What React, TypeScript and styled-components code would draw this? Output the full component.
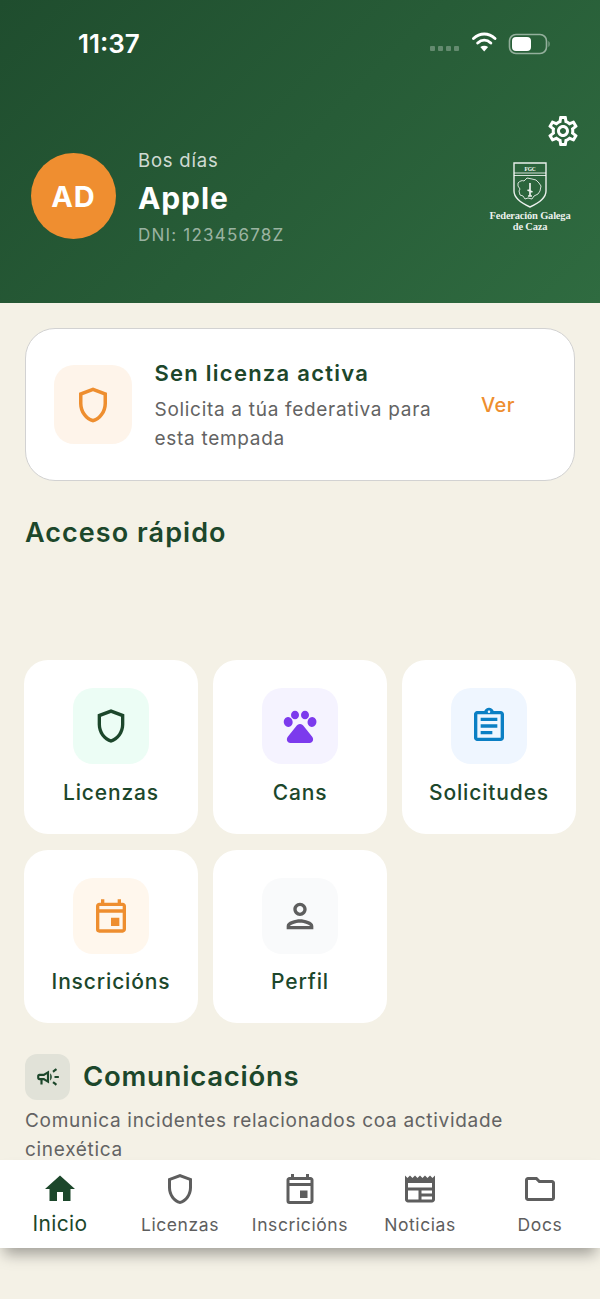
import React from 'react';
import styled, { createGlobalStyle } from 'styled-components';
import {
  MdHome,
  MdOutlineAssignment,
  MdOutlineCampaign,
  MdOutlineEvent,
  MdOutlineFolder,
  MdOutlineNewspaper,
  MdOutlinePerson,
  MdOutlineSettings,
  MdOutlineShield,
} from 'react-icons/md';

const GlobalStyle = createGlobalStyle`
  html, body {
    margin: 0;
    padding: 0;
    background: #f4f1e6;
  }
  * {
    box-sizing: border-box;
  }
  body {
    font-family: Inter, "Liberation Sans", sans-serif;
  }
`;

const Screen = styled.div`
  width: 600px;
  height: 1299px;
  overflow: hidden;
  background: #f4f1e6;
  display: flex;
  flex-direction: column;
`;

const Header = styled.header`
  height: 303px;
  flex: none;
  background: linear-gradient(135deg, #1f4d2e 0%, #2f6b40 100%);
  color: #fff;
`;

const StatusBar = styled.div`
  height: 113px;
  padding: 29px 50px 0 78px;
  display: flex;
  align-items: flex-start;
  justify-content: space-between;
`;

const Time = styled.span`
  font-size: 26px;
  line-height: 30px;
  font-weight: 600;
`;

const StatusIcons = styled.svg`
  width: 120px;
  height: 30px;
  display: block;
`;

const HeaderRow = styled.div`
  display: flex;
  justify-content: space-between;
  align-items: flex-start;
  padding: 0 19px 0 31px;
`;

const Profile = styled.div`
  display: flex;
  align-items: flex-start;
  gap: 22px;
  margin-top: 35px;
`;

const Avatar = styled.div`
  width: 85px;
  height: 86px;
  margin-top: 5px;
  border-radius: 50%;
  background: #ef8e30;
  display: flex;
  align-items: center;
  justify-content: center;
  font-size: 29px;
  font-weight: 700;
  letter-spacing: 1px;
`;

const ProfileText = styled.div`
  display: flex;
  flex-direction: column;
`;

const Greeting = styled.span`
  font-size: 18.5px;
  line-height: 24px;
  letter-spacing: 0.8px;
  color: rgba(255, 255, 255, 0.8);
`;

const UserName = styled.span`
  font-size: 30px;
  line-height: 38px;
  font-weight: 700;
  letter-spacing: 0.9px;
  margin-top: 7px;
`;

const Dni = styled.span`
  font-size: 17px;
  line-height: 24px;
  letter-spacing: 1.2px;
  color: rgba(255, 255, 255, 0.55);
  margin-top: 6px;
`;

const HeaderSide = styled.div`
  display: flex;
  flex-direction: column;
  align-items: flex-end;
`;

const Crest = styled.div`
  width: 80px;
  margin: 13px 11px 0 0;
  display: flex;
  flex-direction: column;
  align-items: center;
  font-family: "Liberation Serif", serif;
  font-size: 10.5px;
  line-height: 11px;
  font-weight: 700;
  text-align: center;
  letter-spacing: -0.2px;
  white-space: nowrap;
  color: rgba(255, 255, 255, 0.92);
`;

const CrestShield = styled.svg`
  width: 34px;
  height: 46px;
  display: block;
  margin-bottom: 2px;
`;

const BandText = styled.text`
  font-family: "Liberation Serif", serif;
  font-size: 5.5px;
  fill: #fff;
  stroke: none;
  text-anchor: middle;
`;

const Main = styled.main`
  height: 857px;
  flex: none;
  overflow: hidden;
  padding: 25px 24px 0;
`;

const LicenseCard = styled.section`
  height: 153px;
  margin: 0 1px;
  background: #fff;
  border: 1.5px solid #d2d2d2;
  border-radius: 30px;
  display: flex;
  align-items: center;
  padding: 0 59px 0 27.5px;
`;

const LicenseIcon = styled.div`
  width: 78px;
  height: 79px;
  flex: none;
  border-radius: 20px;
  background: #fef4ea;
  color: #ee8e2f;
  display: flex;
  align-items: center;
  justify-content: center;
`;

const LicenseText = styled.div`
  flex: 1;
  margin-left: 23px;
  padding-top: 3px;
`;

const LicenseTitle = styled.div`
  font-size: 22px;
  line-height: 26px;
  font-weight: 600;
  letter-spacing: 1.25px;
  color: #1c472b;
`;

const BodyText = styled.p`
  margin: 0;
  font-size: 19px;
  line-height: 29px;
  letter-spacing: 0.7px;
  color: #636363;
`;

const LicenseBody = styled(BodyText)`
  margin-top: 9px;
  width: 290px;
`;

const LicenseLink = styled.span`
  font-size: 20px;
  font-weight: 500;
  letter-spacing: 0.5px;
  color: #ee8e2f;
`;

const SectionTitle = styled.h2`
  margin: 33px 0 0 1px;
  font-size: 27px;
  line-height: 38px;
  font-weight: 600;
  letter-spacing: 1.05px;
  color: #1c472b;
`;

const TileGrid = styled.div`
  margin-top: 108px;
  display: grid;
  grid-template-columns: repeat(3, 174px);
  grid-auto-rows: 173.5px;
  column-gap: 15px;
  row-gap: 16px;
`;

const Tile = styled.div`
  background: #fff;
  border-radius: 24px;
  display: flex;
  flex-direction: column;
  align-items: center;
  padding-top: 28px;
`;

const TileIcon = styled.div<{ $bg: string; $fg: string }>`
  width: 76px;
  height: 76px;
  border-radius: 20px;
  background: ${(p) => p.$bg};
  color: ${(p) => p.$fg};
  display: flex;
  align-items: center;
  justify-content: center;
`;

const TileLabel = styled.span`
  margin-top: 14.5px;
  font-size: 21px;
  line-height: 28px;
  font-weight: 500;
  letter-spacing: 0.85px;
  color: #1c472b;
`;

const CommsHead = styled.div`
  margin: 31px 0 0 1px;
  display: flex;
  align-items: center;
  gap: 13px;
`;

const CommsIcon = styled.div`
  width: 45px;
  height: 46px;
  border-radius: 12px;
  background: #e1e2d8;
  color: #1c472b;
  display: flex;
  align-items: center;
  justify-content: center;
`;

const CommsTitle = styled.h2`
  margin: 0 0 2px;
  font-size: 27.5px;
  line-height: 44px;
  font-weight: 600;
  letter-spacing: 0.75px;
  color: #1c472b;
`;

const CommsBody = styled(BodyText)`
  margin: 6px 0 0 1px;
  width: 520px;
`;

const BottomNav = styled.nav`
  height: 88px;
  flex: none;
  background: #fff;
  display: grid;
  grid-template-columns: repeat(5, 120px);
  box-shadow: 0 10px 14px -4px rgba(0, 0, 0, 0.35);
`;

const NavItem = styled.div<{ $active?: boolean }>`
  display: flex;
  flex-direction: column;
  align-items: center;
  padding-top: 11px;
  color: ${(p) => (p.$active ? '#1c472b' : '#5e5e5e')};
`;

const NavLabel = styled.span<{ $active?: boolean }>`
  margin-top: ${(p) => (p.$active ? '4px' : '5px')};
  font-size: ${(p) => (p.$active ? '21px' : '17.5px')};
  line-height: 26px;
  letter-spacing: ${(p) => (p.$active ? '0.4px' : '0.6px')};
`;

const PawIcon = () => (
  <svg width="34" height="34" viewBox="0 0 34 34" fill="currentColor">
    <ellipse cx="5.2" cy="13" rx="4.4" ry="4.9" transform="rotate(-15 5.2 13)" />
    <ellipse cx="12" cy="6" rx="4" ry="4.3" />
    <ellipse cx="22" cy="6" rx="4" ry="4.3" />
    <ellipse cx="29" cy="13" rx="4.4" ry="4.9" transform="rotate(15 29 13)" />
    <path d="M17 15c1.8 0 3 1.2 4 2.6l8.2 10.2c1.8 2.4.9 6.2-2.6 6.2H7.4c-3.5 0-4.4-3.8-2.6-6.2L13 17.6c1-1.4 2.2-2.6 4-2.6z" />
  </svg>
);

const App: React.FC = () => {
  return (
    <>
      <GlobalStyle />
      <Screen>
        <Header>
          <StatusBar>
            <Time>11:37</Time>
            <StatusIcons viewBox="0 0 120 30">
              <g fill="#fff" opacity="0.28">
                <rect x="0" y="17" width="5" height="5" rx="1" />
                <rect x="8" y="17" width="5" height="5" rx="1" />
                <rect x="16" y="17" width="5" height="5" rx="1" />
                <rect x="24" y="17" width="5" height="5" rx="1" />
              </g>
              <g fill="none" stroke="#fff" strokeWidth="3" strokeLinecap="round">
                <path d="M43.5 9.5c6.5-6 15-6 21.5 0" />
                <path d="M47.7 14c4-3.6 9.1-3.6 13.1 0" />
              </g>
              <path d="M54.2 22.5l-3.9-4.4c2.3-1.7 5.5-1.7 7.8 0z" fill="#fff" />
              <rect x="79.5" y="5.5" width="37" height="19" rx="6.5" fill="none" stroke="#fff" strokeOpacity="0.5" strokeWidth="1.6" />
              <rect x="82" y="8" width="19" height="14" rx="4" fill="#fff" />
              <path d="M118.5 12v6c1.4-.6 1.4-5.4 0-6z" fill="#fff" fillOpacity="0.5" />
            </StatusIcons>
          </StatusBar>
          <HeaderRow>
            <Profile>
              <Avatar>AD</Avatar>
              <ProfileText>
                <Greeting>Bos días</Greeting>
                <UserName>Apple</UserName>
                <Dni>DNI: 12345678Z</Dni>
              </ProfileText>
            </Profile>
            <HeaderSide>
              <MdOutlineSettings size={36} />
              <Crest>
                <CrestShield viewBox="0 0 34 46" fill="none" stroke="#fff" strokeOpacity="0.9">
                  <path d="M1 1h32v28c0 7-7 12-16 16C8 41 1 36 1 29z" strokeWidth="1.4" />
                  <path d="M1 11h32M1 13.5h32" strokeWidth="0.9" />
                  <BandText x="17" y="8.5">FGC</BandText>
                  <path d="M5 21c2-2 4-3 6-2l3-3 5 1 4 1 3 3 2 3-1 5-2 3-4 2-2 3-4-1-3 1-2-3-3-1-1-4 1-2-2-3z" strokeWidth="0.9" />
                  <path d="M17 21v13M14.5 28l5 2M15 34h4" strokeWidth="1.7" />
                </CrestShield>
                <span>Federación Galega</span>
                <span>de Caza</span>
              </Crest>
            </HeaderSide>
          </HeaderRow>
        </Header>

        <Main>
          <LicenseCard>
            <LicenseIcon>
              <MdOutlineShield size={42} />
            </LicenseIcon>
            <LicenseText>
              <LicenseTitle>Sen licenza activa</LicenseTitle>
              <LicenseBody>Solicita a túa federativa para esta tempada</LicenseBody>
            </LicenseText>
            <LicenseLink>Ver</LicenseLink>
          </LicenseCard>

          <SectionTitle>Acceso rápido</SectionTitle>

          <TileGrid>
            <Tile>
              <TileIcon $bg="#ecfdf5" $fg="#1c472b">
                <MdOutlineShield size={40} />
              </TileIcon>
              <TileLabel>Licenzas</TileLabel>
            </Tile>
            <Tile>
              <TileIcon $bg="#f5f3ff" $fg="#7c3aed">
                <PawIcon />
              </TileIcon>
              <TileLabel>Cans</TileLabel>
            </Tile>
            <Tile>
              <TileIcon $bg="#eff6ff" $fg="#0b7fc4">
                <MdOutlineAssignment size={40} />
              </TileIcon>
              <TileLabel>Solicitudes</TileLabel>
            </Tile>
            <Tile>
              <TileIcon $bg="#fff7ed" $fg="#ee8e2f">
                <MdOutlineEvent size={40} />
              </TileIcon>
              <TileLabel>Inscricións</TileLabel>
            </Tile>
            <Tile>
              <TileIcon $bg="#f9fafb" $fg="#5e5e5e">
                <MdOutlinePerson size={40} />
              </TileIcon>
              <TileLabel>Perfil</TileLabel>
            </Tile>
          </TileGrid>

          <CommsHead>
            <CommsIcon>
              <MdOutlineCampaign size={26} />
            </CommsIcon>
            <CommsTitle>Comunicacións</CommsTitle>
          </CommsHead>
          <CommsBody>Comunica incidentes relacionados coa actividade cinexética</CommsBody>
        </Main>

        <BottomNav>
          <NavItem $active>
            <MdHome size={36} />
            <NavLabel $active>Inicio</NavLabel>
          </NavItem>
          <NavItem>
            <MdOutlineShield size={36} />
            <NavLabel>Licenzas</NavLabel>
          </NavItem>
          <NavItem>
            <MdOutlineEvent size={36} />
            <NavLabel>Inscricións</NavLabel>
          </NavItem>
          <NavItem>
            <MdOutlineNewspaper size={36} />
            <NavLabel>Noticias</NavLabel>
          </NavItem>
          <NavItem>
            <MdOutlineFolder size={36} />
            <NavLabel>Docs</NavLabel>
          </NavItem>
        </BottomNav>
      </Screen>
    </>
  );
};

export default App;
